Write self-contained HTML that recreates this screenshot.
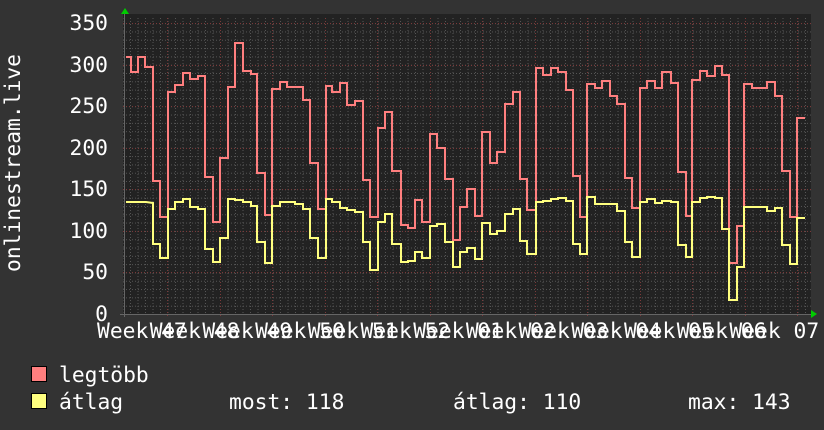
<!DOCTYPE html>
<html><head><meta charset="utf-8"><style>
html,body{margin:0;padding:0;background:#333;}
svg{display:block;}
text{font-family:"DejaVu Sans Mono","Liberation Mono",monospace;font-size:21.3px;fill:#fff;}
</style></head><body>
<svg width="824" height="430" viewBox="0 0 824 430" xmlns="http://www.w3.org/2000/svg">
<defs>
<pattern id="mh" x="0" y="314" width="824" height="8.31" patternUnits="userSpaceOnUse">
<line x1="0" y1="0.5" x2="824" y2="0.5" stroke="#555" stroke-width="1" stroke-dasharray="1,2"/>
</pattern>
<pattern id="mv" x="122.5" y="0" width="7.5" height="430" patternUnits="userSpaceOnUse">
<line x1="0.5" y1="0" x2="0.5" y2="430" stroke="#555" stroke-width="1" stroke-dasharray="1,2"/>
</pattern>
</defs>
<rect x="0" y="0" width="824" height="430" fill="#333"/>
<rect x="123" y="14" width="688" height="301" fill="#222"/>
<rect x="123" y="18" width="688" height="297" fill="url(#mh)"/>
<rect x="123" y="18" width="688" height="297" fill="url(#mv)"/>
<g stroke="#7a3a3a" stroke-width="1" stroke-dasharray="1,2">
<line x1="123" x2="811" y1="272.5" y2="272.5"/>
<line x1="123" x2="811" y1="231.5" y2="231.5"/>
<line x1="123" x2="811" y1="189.5" y2="189.5"/>
<line x1="123" x2="811" y1="148.5" y2="148.5"/>
<line x1="123" x2="811" y1="106.5" y2="106.5"/>
<line x1="123" x2="811" y1="65.5" y2="65.5"/>
<line x1="123" x2="811" y1="23.5" y2="23.5"/>
<line y1="18" y2="316" x1="167.5" x2="167.5"/><line y1="18" y2="316" x1="220.5" x2="220.5"/>
<line y1="18" y2="316" x1="272.5" x2="272.5"/><line y1="18" y2="316" x1="325.5" x2="325.5"/>
<line y1="18" y2="316" x1="377.5" x2="377.5"/><line y1="18" y2="316" x1="430.5" x2="430.5"/>
<line y1="18" y2="316" x1="482.5" x2="482.5"/><line y1="18" y2="316" x1="535.5" x2="535.5"/>
<line y1="18" y2="316" x1="587.5" x2="587.5"/><line y1="18" y2="316" x1="640.5" x2="640.5"/>
<line y1="18" y2="316" x1="692.5" x2="692.5"/><line y1="18" y2="316" x1="745.5" x2="745.5"/>
<line y1="18" y2="316" x1="797.5" x2="797.5"/>
</g>
<line x1="120" y1="314.5" x2="811" y2="314.5" stroke="#666" stroke-width="1"/>
<line x1="124.5" y1="12" x2="124.5" y2="317" stroke="#666" stroke-width="1"/>
<polygon points="121,14 125,8 129,14" fill="#0c0"/>
<polygon points="811,310 817,314 811,318" fill="#0c0"/>
<polyline fill="none" stroke="#ff7f7f" stroke-width="2" points="
126,57 131,57 131,72 138,72 138,57 145,57 145,67 153,67 153,181 160,181 160,217 168,217 168,92 175,92 175,85 183,85 183,73 190,73 190,79 198,79 198,76 205,76 205,177 213,177 213,222 220,222 220,158 228,158 228,87 235,87 235,43 243,43 243,71 251,71 251,74 257,74 257,173 265,173 265,215 272,215 272,89 280,89 280,82 287,82 287,87 303,87 303,100 310,100 310,163 318,163 318,209 326,209 326,86 332,86 332,92 340,92 340,83 347,83 347,105 355,105 355,101 363,101 363,180 370,180 370,217 378,217 378,128 385,128 385,112 392,112 392,171 401,171 401,225 408,225 408,228 415,228 415,200 422,200 422,222 430,222 430,134 437,134 437,148 445,148 445,179 453,179 453,240 460,240 460,207 467,207 467,189 475,189 475,216 482,216 482,132 490,132 490,163 497,163 497,152 505,152 505,104 513,104 513,92 520,92 520,179 527,179 527,210 536,210 536,68 543,68 543,75 551,75 551,68 558,68 558,72 566,72 566,90 573,90 573,176 580,176 580,217 587,217 587,84 595,84 595,88 602,88 602,81 610,81 610,96 617,96 617,104 625,104 625,178 632,178 632,208 640,208 640,88 647,88 647,81 655,81 655,88 662,88 662,72 671,72 671,83 678,83 678,172 686,172 686,216 692,216 692,80 700,80 700,71 707,71 707,76 715,76 715,66 722,66 722,75 729,75 729,263 737,263 737,226 744,226 744,84 752,84 752,88 767,88 767,82 775,82 775,96 782,96 782,171 790,171 790,217 797,217 797,118 805,118"/>
<polyline fill="none" stroke="#ffff7f" stroke-width="2" points="
126,202 146,202 153,203 153,244 160,244 160,258 168,258 168,209 175,209 175,202 183,202 183,199 190,199 190,207 198,207 198,209 205,209 205,249 213,249 213,262 220,262 220,238 228,238 228,199 235,199 235,200 243,200 243,202 251,202 251,206 257,206 257,242 265,242 265,263 272,263 272,206 280,206 280,202 287,202 287,202 295,202 295,204 303,204 303,209 310,209 310,238 318,238 318,258 326,258 326,199 332,199 332,202 340,202 340,208 347,208 347,210 355,210 355,212 363,212 363,242 370,242 370,270 378,270 378,222 385,222 385,214 392,214 392,244 401,244 401,262 408,262 408,261 415,261 415,252 422,252 422,258 430,258 430,226 437,226 437,224 445,224 445,242 453,242 453,267 460,267 460,252 467,252 467,248 475,248 475,259 482,259 482,223 490,223 490,234 497,234 497,231 505,231 505,214 513,214 513,209 520,209 520,241 527,241 527,254 536,254 536,202 543,202 543,201 551,201 551,199 558,199 558,198 566,198 566,201 573,201 573,244 580,244 580,254 587,254 587,197 595,197 595,204 617,204 617,211 625,211 625,242 632,242 632,257 640,257 640,202 647,202 647,199 655,199 655,203 662,203 662,201 671,201 671,202 678,202 678,245 686,245 686,257 692,257 692,202 700,202 700,198 707,198 707,197 715,197 715,198 722,198 722,229 729,229 729,300 737,300 737,267 744,267 744,207 752,207 752,207 767,207 767,211 775,211 775,208 782,208 782,245 790,245 790,264 797,264 797,218 805,218"/>
<g text-anchor="end">
<text x="108" y="30">350</text><text x="108" y="72">300</text><text x="108" y="113">250</text>
<text x="108" y="155">200</text><text x="108" y="196">150</text><text x="108" y="238">100</text>
<text x="108" y="279">50</text><text x="108" y="321">0</text>
</g>
<text transform="translate(20,163) rotate(-90)" text-anchor="middle">onlinestream.live</text>
<g>
<text x="97" y="338">Week 47</text><text x="149.7" y="338">Week 48</text><text x="202.4" y="338">Week 49</text>
<text x="255.1" y="338">Week 50</text><text x="307.8" y="338">Week 51</text><text x="360.5" y="338">Week 52</text>
<text x="413.2" y="338">Week 01</text><text x="465.9" y="338">Week 02</text><text x="518.6" y="338">Week 03</text>
<text x="571.3" y="338">Week 04</text><text x="624" y="338">Week 05</text><text x="676.7" y="338">Week 06</text>
<text x="729.4" y="338">Week 07</text>
</g>
<rect x="31.5" y="366.5" width="15" height="15" fill="#ff7f7f" stroke="#000"/>
<rect x="31.5" y="393.5" width="15" height="15" fill="#ffff7f" stroke="#000"/>
<text x="59" y="382">legtöbb</text>
<text x="59" y="409">átlag</text>
<text x="229" y="409">most: 118</text>
<text x="453" y="409">átlag: 110</text>
<text x="688" y="409">max: 143</text>
</svg>
</body></html>
